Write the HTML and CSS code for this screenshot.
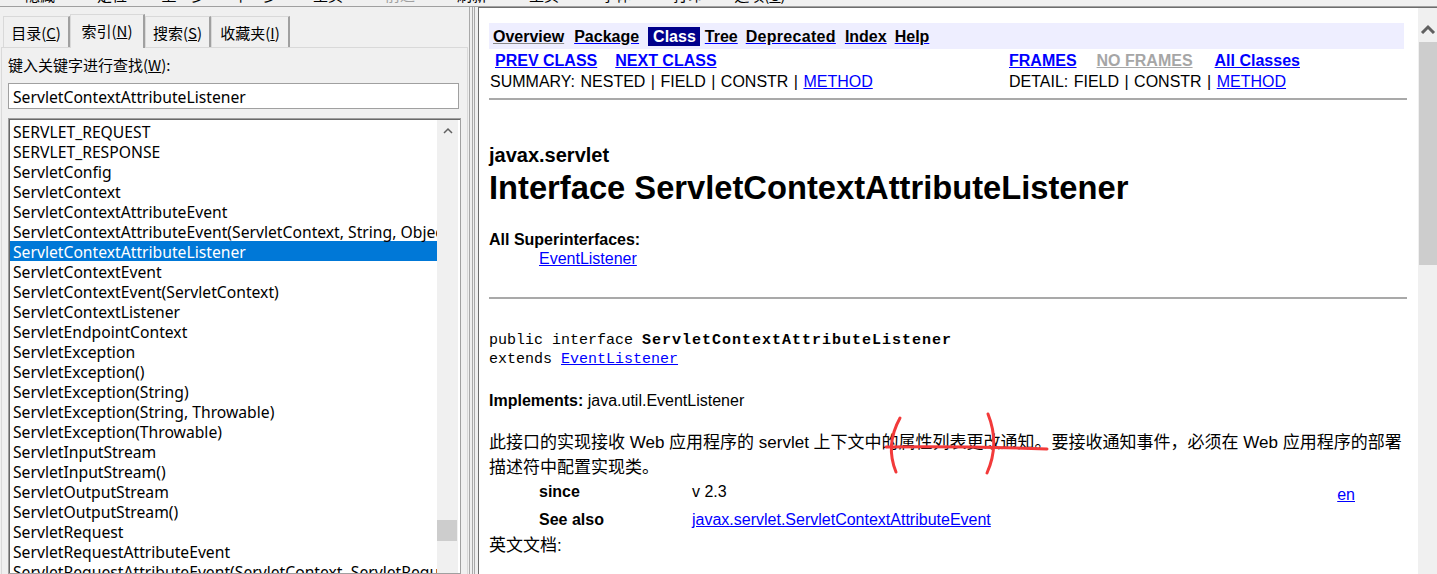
FILE: index.html
```html
<!DOCTYPE html>
<html lang="zh-CN">
<head>
<meta charset="utf-8">
<title>javax.servlet.ServletContextAttributeListener</title>
<link rel="stylesheet" href="styles.css">
</head>
<body>
<div class="toolbar">
  <span class="tb">隐藏</span>
  <span class="tb">定位</span>
  <span class="tb">上一步</span>
  <span class="tb">下一步</span>
  <span class="tb">主页</span>
  <span class="tb dim">前进</span>
  <span class="tb">刷新</span>
  <span class="tb">主页</span>
  <span class="tb">字体</span>
  <span class="tb">打印</span>
  <span class="tb">选项(<u>O</u>)</span>
</div>
<div class="main">
  <div class="left">
    <div class="tabs">
      <div class="tab t1">目录(<u>C</u>)</div>
      <div class="tab t2 active">索引(<u>N</u>)</div>
      <div class="tab t3">搜索(<u>S</u>)</div>
      <div class="tab t4">收藏夹(<u>I</u>)</div>
    </div>
    <div class="panel">
      <div class="label">键入关键字进行查找(<u>W</u>):</div>
      <div class="input">ServletContextAttributeListener</div>
      <div class="listbox">
        <div class="items">
          <div class="item">SERVLET_REQUEST</div>
          <div class="item">SERVLET_RESPONSE</div>
          <div class="item">ServletConfig</div>
          <div class="item">ServletContext</div>
          <div class="item">ServletContextAttributeEvent</div>
          <div class="item">ServletContextAttributeEvent(ServletContext, String, Object)</div>
          <div class="item sel">ServletContextAttributeListener</div>
          <div class="item">ServletContextEvent</div>
          <div class="item">ServletContextEvent(ServletContext)</div>
          <div class="item">ServletContextListener</div>
          <div class="item">ServletEndpointContext</div>
          <div class="item">ServletException</div>
          <div class="item">ServletException()</div>
          <div class="item">ServletException(String)</div>
          <div class="item">ServletException(String, Throwable)</div>
          <div class="item">ServletException(Throwable)</div>
          <div class="item">ServletInputStream</div>
          <div class="item">ServletInputStream()</div>
          <div class="item">ServletOutputStream</div>
          <div class="item">ServletOutputStream()</div>
          <div class="item">ServletRequest</div>
          <div class="item">ServletRequestAttributeEvent</div>
          <div class="item">ServletRequestAttributeEvent(ServletContext, ServletRequest, String, Object)</div>
        </div>
        <div class="lscroll">
          <div class="lbtn"><svg width="10" height="7" viewBox="0 0 10 7"><polyline points="1,6 5,2 9,6" fill="none" stroke="#606060" stroke-width="1.5"/></svg></div>
          <div class="ltrack"><div class="lthumb"></div></div>
        </div>
      </div>
    </div>
  </div>
  <div class="splitter"></div>
  <div class="right">
    <div class="doc">
      <div class="nav">
        <a class="navlink first">Overview</a>
        <a class="navlink">Package</a>
        <span class="cur">Class</span>
        <a class="navlink">Tree</a>
        <a class="navlink wide">Deprecated</a>
        <a class="navlink">Index</a>
        <a class="navlink">Help</a>
      </div>
      <div class="subnav">
        <div class="cell pn"><a class="bl prev">PREV CLASS</a><a class="bl">NEXT CLASS</a></div>
        <div class="cell"><a class="bl frames">FRAMES</a><a class="bl gray">NO FRAMES</a><a class="bl">All Classes</a></div>
        <div class="cell sum">SUMMARY: NESTED | FIELD | CONSTR | <a class="ln">METHOD</a></div>
        <div class="cell sum2">DETAIL: FIELD | CONSTR | <a class="ln">METHOD</a></div>
      </div>
      <div class="hr hr1"></div>
      <div class="pkg">javax.servlet</div>
      <h1 class="title">Interface ServletContextAttributeListener</h1>
      <div class="dt">All Superinterfaces:</div>
      <div class="dd"><a class="ln">EventListener</a></div>
      <div class="hr hr2"></div>
      <div class="code">public interface <b class="cb">ServletContextAttributeListener</b><br>extends <a class="ln">EventListener</a></div>
      <div class="impl"><b>Implements:</b> java.util.EventListener</div>
      <p class="desc">此接口的实现接收 Web 应用程序的 servlet 上下文中的属性列表更改通知。要接收通知事件，必须在 Web 应用程序的部署描述符中配置实现类。</p>
      <div class="tags">
        <div class="tag r1"><b>since</b></div>
        <div class="val r1">v 2.3</div>
        <div class="en r1"><a class="ln">en</a></div>
        <div class="tag r2"><b>See also</b></div>
        <div class="val r2"><a class="ln">javax.servlet.ServletContextAttributeEvent</a></div>
        <div class="en r2"></div>
      </div>
      <div class="endoc">英文文档:</div>
    </div>
    <div class="rscroll">
      <div class="rbtn"><svg width="16" height="10" viewBox="0 0 16 10"><polyline points="2,9 8,3 14,9" fill="none" stroke="#606060" stroke-width="3"/></svg></div>
      <div class="rthumb"></div>
    </div>
  </div>
</div>
<svg class="annot" width="180" height="72" viewBox="0 0 180 72">
  <path d="M20 10 Q 5 37 16 64" fill="none" stroke="#f23a3a" stroke-width="3" stroke-linecap="round"/>
  <path d="M108 6 Q 120 36 107 65" fill="none" stroke="#f23a3a" stroke-width="3" stroke-linecap="round"/>
  <path d="M6 39 Q 80 38 167 41" fill="none" stroke="#f23a3a" stroke-width="3" stroke-linecap="round"/>
</svg>
</body>
</html>
```
FILE: styles.css
```css
html, body { margin: 0; padding: 0; }
body {
  width: 1437px;
  height: 574px;
  overflow: hidden;
  background: #f0f0f0;
  font-family: "Noto Sans", "Noto Sans CJK SC", sans-serif;
  position: relative;
}
u { text-decoration: underline; }

/* clipped toolbar */
.toolbar {
  height: 6px;
  border-bottom: 1px solid #a0a0a0;
  display: flex;
  align-items: flex-end;
  overflow: hidden;
  padding-left: 4px;
}
.tb {
  flex: 0 0 72px;
  text-align: center;
  font: 15px/20px "Noto Sans CJK SC", sans-serif;
  margin-bottom: 1px;
  color: #000;
}
.tb.dim { color: #a0a0a0; }

.main { display: flex; height: 567px; }

/* left pane */
.left {
  width: 467px;
  padding: 7px 0 0 1px;
  display: flex;
  flex-direction: column;
}
.tabs {
  display: flex;
  align-items: flex-end;
  height: 33px;
  padding-left: 2px;
  position: relative;
  z-index: 1;
}
.tab {
  box-sizing: border-box;
  height: 31px;
  border-top: 1px solid #d9d9d9;
  border-left: 1px solid #d9d9d9;
  border-right: 2px solid #a0a0a0;
  background: #f0f0f0;
  font: 15px/32px "Noto Sans CJK SC", sans-serif;
  text-align: center;
  color: #000;
}
.tab.active {
  height: 34px;
  margin-bottom: -1px;
  line-height: 31px;
  background: #f0f0f0;
}
.t1 { width: 67px; }
.t2 { width: 75px; }
.t3 { width: 66px; }
.t4 { width: 79px; }

.panel {
  flex: 1;
  border-top: 1px solid #d9d9d9;
  border-left: 1px solid #d9d9d9;
  border-right: 1px solid #d9d9d9;
  padding: 6px 0 0 6px;
  display: flex;
  flex-direction: column;
  min-height: 0;
}
.label {
  font: 15px/21px "Noto Sans CJK SC", sans-serif;
  color: #000;
}
.input {
  margin-top: 8px;
  width: 451px;
  height: 26px;
  box-sizing: border-box;
  border: 1px solid #a0a0a0;
  background: #fff;
  padding-left: 4px;
  font-size: 15.7px;
  line-height: 26px;
  color: #000;
  white-space: nowrap;
}
.listbox {
  margin-top: 9px;
  width: 453px;
  flex: 1;
  box-sizing: border-box;
  border: 1px solid #a0a0a0;
  box-shadow: inset 1px 1px 0 #696969;
  background: #fff;
  display: flex;
  padding: 1px 2px 0 1px;
  min-height: 0;
  overflow: hidden;
}
.items {
  width: 427px;
  padding-top: 1px;
  overflow: hidden;
}
.item {
  height: 20px;
  line-height: 22px;
  font-size: 15.7px;
  padding-left: 3px;
  white-space: nowrap;
  color: #000;
}
.item.sel { background: #0078d7; color: #fff; }
.lscroll {
  width: 21px;
  background: #f0f0f0;
  display: flex;
  flex-direction: column;
}
.lbtn {
  height: 21px;
  display: flex;
  align-items: center;
  justify-content: center;
}
.ltrack { flex: 1; padding-top: 379px; }
.lthumb { height: 21px; background: #cdcdcd; margin-right: 1px; }

.splitter {
  width: 10px;
  background:
    linear-gradient(to right,
      transparent 0, transparent 1px,
      #a9a9a9 1px, #a9a9a9 2px,
      transparent 2px, transparent 4px,
      #a9a9a9 4px, #a9a9a9 5px,
      transparent 5px, transparent 6px,
      #a9a9a9 6px, #a9a9a9 7px,
      transparent 7px);
}

/* right pane */
.right {
  flex: 1;
  border-left: 1px solid #6d6d6d;
  border-top: 1px solid #6d6d6d;
  background: #fff;
  display: flex;
  min-width: 0;
}
.doc {
  width: 918px;
  padding: 15px 11px 0 10px;
  font-family: "Liberation Sans", "Noto Sans CJK SC", sans-serif;
  font-size: 16px;
  color: #000;
  overflow: hidden;
}
.nav {
  display: flex;
  align-items: center;
  height: 26px;
  background: #eeeeff;
  padding-left: 4px;
  margin-right: 3px;
}
.navlink {
  font-weight: bold;
  color: #000;
  text-decoration: underline;
  text-decoration-color: #0000ff;
  margin-right: 8px;
  line-height: 19px;
}
.navlink.first { text-decoration-color: #8a8a8a; margin-right: 10px; }
.navlink.wide { letter-spacing: 0.3px; margin-right: 9px; }
.cur {
  font-weight: bold;
  background: #00008b;
  color: #fff;
  padding: 0 4px 0 5px;
  margin: 0 5px 0 1px;
  line-height: 19px;
}
.subnav {
  margin-top: 1px;
  display: grid;
  grid-template-columns: 520px 1fr;
  grid-auto-rows: 21px;
  align-items: center;
  white-space: nowrap;
}
.cell { line-height: 19px; }
.pn { padding-left: 6px; }
.sum { padding-left: 1px; word-spacing: 1px; }
.sum2 { word-spacing: 1px; }
.bl { font-weight: bold; color: #0000ff; text-decoration: underline; word-spacing: 0; }
.bl.prev { margin-right: 18px; }
.bl.frames { margin-right: 20px; }
.bl.gray { color: #a6a6a6; margin-right: 22px; }
.ln { color: #0000ff; text-decoration: underline; }

.hr { height: 0; border-top: 2px solid #a9a9a9; }
.hr1 { margin-top: 6px; }
.pkg {
  margin-top: 43px;
  font-size: 20px;
  line-height: 24px;
  font-weight: bold;
}
.title {
  margin: 2px 0 0;
  font-size: 32.7px;
  line-height: 38px;
  font-weight: bold;
  white-space: nowrap;
}
.dt {
  margin-top: 23px;
  font-weight: bold;
  line-height: 19px;
}
.dd { padding-left: 50px; line-height: 19px; }
.hr2 { margin-top: 29px; }
.code {
  margin-top: 32px;
  font-family: "Liberation Mono", monospace;
  font-size: 15px;
  line-height: 19px;
  white-space: nowrap;
}
.cb { letter-spacing: 1px; }
.impl { margin-top: 22px; line-height: 19px; }
.desc {
  margin: 20px 0 0;
  font-size: 17px;
  line-height: 25px;
}
.tags {
  margin-top: -2px;
  display: grid;
  grid-template-columns: 50px 153px 1fr auto;
  grid-template-rows: 27px 30px;
  align-items: center;
}
.tag { grid-column: 2; font-weight: bold; }
.val { grid-column: 3; }
.en { grid-column: 4; margin-right: 52px; padding-top: 6px; }
.r1 { grid-row: 1; }
.r2 { grid-row: 2; }
.endoc { font-size: 17px; line-height: 22px; }

.rscroll {
  width: 19px;
  background: #f0f0f0;
  display: flex;
  flex-direction: column;
}
.rbtn {
  height: 34px;
  display: flex;
  justify-content: center;
  align-items: flex-start;
}
.rbtn svg { margin-top: 16px; margin-left: 1px; }
.rthumb { height: 223px; background: #cdcdcd; margin-left: 1px; }

.annot {
  position: absolute;
  left: 880px;
  top: 408px;
}
```
